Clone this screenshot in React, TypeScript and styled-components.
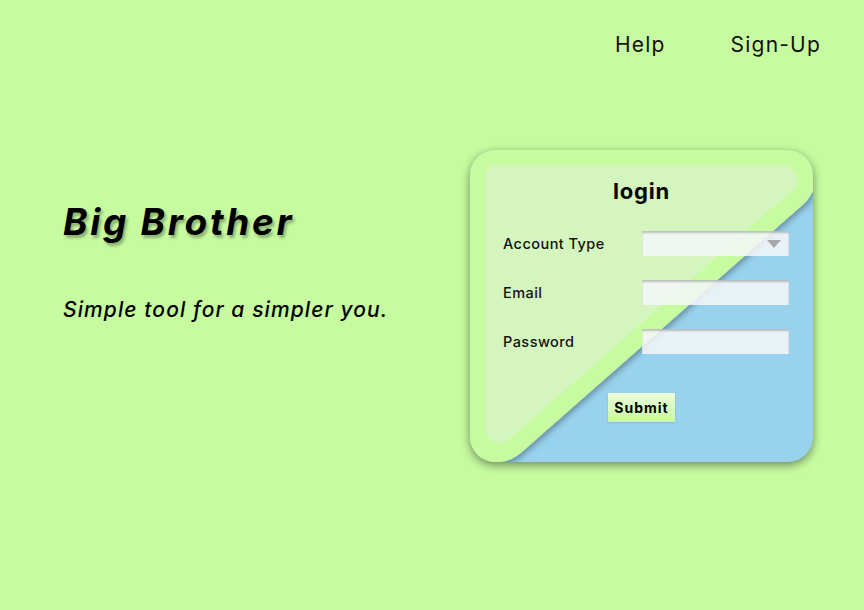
import React from "react";
import styled, { createGlobalStyle } from "styled-components";

const GlobalStyle = createGlobalStyle`
  html, body { margin: 0; padding: 0; background: #c6fb9f; }
  body { font-family: "Inter", "Liberation Sans", sans-serif; color: #000; }
  #root { min-height: 610px; }
`;

const Page = styled.div`
  width: 864px;
  height: 610px;
  background: #c6fb9f;
  display: flex;
  flex-direction: column;
  overflow: hidden;
`;

const Header = styled.header`
  display: flex;
  justify-content: flex-end;
  gap: 65px;
  padding: 32px 43px 0 0;
`;

const NavLink = styled.a`
  font-size: 21px;
  line-height: 25px;
  font-weight: 400;
  letter-spacing: 1.2px;
  color: #111;
  text-decoration: none;
  cursor: pointer;
`;

const Main = styled.main`
  display: flex;
  align-items: flex-start;
  justify-content: space-between;
  margin-top: 93px;
  padding: 0 51px 0 63px;
`;

const Hero = styled.section`
  display: flex;
  flex-direction: column;
  padding-top: 50px;
`;

const Title = styled.h1`
  margin: 0;
  font-size: 37px;
  line-height: 44px;
  font-weight: 700;
  font-style: italic;
  letter-spacing: 2.7px;
  text-shadow: 2px 3px 3px rgba(0, 0, 0, 0.3);
`;

const Tagline = styled.p`
  margin: 53px 0 0;
  font-size: 21px;
  line-height: 26px;
  font-weight: 500;
  font-style: italic;
  letter-spacing: 1.1px;
`;

const Card = styled.div`
  position: relative;
  width: 343px;
  height: 312px;
  border-radius: 25px;
  overflow: hidden;
  background: #98d2ed;
  box-shadow: 0 3px 10px rgba(0, 0, 0, 0.45);
`;

const Backdrop = styled.svg`
  position: absolute;
  inset: 0;
  width: 100%;
  height: 100%;
`;

const Form = styled.form`
  position: relative;
  display: flex;
  flex-direction: column;
  align-items: center;
  padding-top: 28px;
`;

const FormTitle = styled.h2`
  margin: 0;
  font-size: 22px;
  line-height: 26px;
  font-weight: 700;
  letter-spacing: 0.8px;
`;

const Fields = styled.div`
  align-self: stretch;
  display: grid;
  grid-template-columns: 139px 147px;
  grid-auto-rows: 25px;
  row-gap: 24px;
  align-items: center;
  margin: 27px 0 0 33px;
`;

const Label = styled.label`
  font-size: 14.5px;
  font-weight: 500;
  letter-spacing: 0.45px;
  color: #111;
`;

const Field = styled.div`
  position: relative;
  height: 25px;
  background: rgba(244, 246, 247, 0.88);
  box-shadow: inset 0 2px 2px rgba(0, 0, 0, 0.22);
`;

const Arrow = styled.span`
  position: absolute;
  right: 8px;
  top: 9px;
  width: 0;
  height: 0;
  border-left: 7px solid transparent;
  border-right: 7px solid transparent;
  border-top: 8px solid #a6a8aa;
`;

const Submit = styled.button`
  margin-top: 39px;
  width: 67px;
  height: 29px;
  border: none;
  padding: 0;
  font-family: inherit;
  font-size: 14px;
  font-weight: 700;
  letter-spacing: 1px;
  color: #000;
  background: linear-gradient(#eafbdc, #c8fa9f);
  box-shadow: 0 1px 2px rgba(0, 0, 0, 0.12);
  cursor: pointer;
`;

export default function App() {
  return (
    <Page>
      <GlobalStyle />
      <Header>
        <NavLink>Help</NavLink>
        <NavLink>Sign-Up</NavLink>
      </Header>
      <Main>
        <Hero>
          <Title>Big Brother</Title>
          <Tagline>Simple tool for a simpler you.</Tagline>
        </Hero>
        <Card>
          <Backdrop viewBox="0 0 343 312" preserveAspectRatio="none" aria-hidden>
            <defs>
              <filter id="tri-shadow" x="-20%" y="-20%" width="140%" height="140%">
                <feDropShadow dx="1" dy="3" stdDeviation="3" floodColor="#000" floodOpacity="0.35" />
              </filter>
            </defs>
            <path
              d="M -15 -15 L 306.2 -15 A 40 40 0 0 1 332.6 55 L 51.4 302.6 A 40 40 0 0 1 -15 272.6 Z"
              fill="#c6fb9f"
              filter="url(#tri-shadow)"
            />
            <path
              d="M 27 15 L 314 15 A 15 15 0 0 1 323 40 L 40 289 A 15 15 0 0 1 15 276 L 15 27 A 12 12 0 0 1 27 15 Z"
              fill="#d4f5bd"
            />
          </Backdrop>
          <Form onSubmit={(e) => e.preventDefault()}>
            <FormTitle>login</FormTitle>
            <Fields>
              <Label>Account Type</Label>
              <Field>
                <Arrow />
              </Field>
              <Label>Email</Label>
              <Field />
              <Label>Password</Label>
              <Field />
            </Fields>
            <Submit type="submit">Submit</Submit>
          </Form>
        </Card>
      </Main>
    </Page>
  );
}
